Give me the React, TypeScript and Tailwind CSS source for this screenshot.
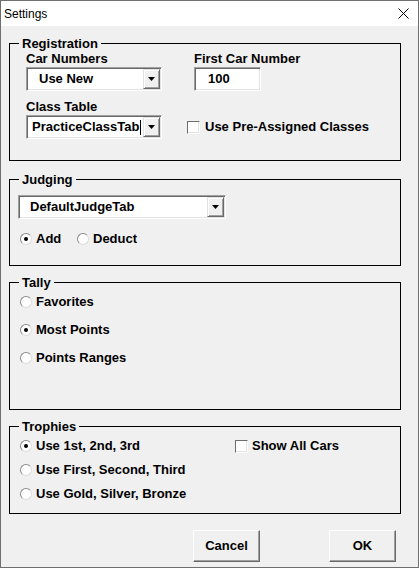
import React from 'react';

const LABEL = "text-[13px] leading-[14px] font-bold";
const SUNKEN = "border border-t-[#a0a0a0] border-l-[#a0a0a0] border-r-white border-b-white shadow-[inset_1px_1px_0_#696969,inset_-1px_-1px_0_#e3e3e3] bg-white";

function Radio({ checked }: { checked?: boolean }) {
  return (
    <span className="flex h-3 w-3 shrink-0 items-center justify-center rounded-full border border-t-[#8a8a8a] border-l-[#8a8a8a] border-r-[#dcdcdc] border-b-[#dcdcdc] bg-white">
      {checked && <span className="h-1 w-1 rounded-full bg-black" />}
    </span>
  );
}

function Check() {
  return (
    <span className="h-[13px] w-[13px] shrink-0 border border-t-[#6d6d6d] border-l-[#6d6d6d] border-r-white border-b-white bg-white shadow-[inset_-1px_-1px_0_#e3e3e3]" />
  );
}

function Combo({ value, className, pad, cursor }: { value: string; className: string; pad: string; cursor?: boolean }) {
  return (
    <div className={`flex h-6 p-px ${SUNKEN} ${className}`}>
      <div className={`flex flex-1 items-center overflow-hidden ${pad} ${LABEL}`}>
        <span className="whitespace-nowrap">{value}</span>
        {cursor && <span className="ml-px h-[15px] w-px shrink-0 bg-black" />}
      </div>
      <div className="flex w-[17px] items-center justify-center border border-t-[#e3e3e3] border-l-[#e3e3e3] border-r-[#696969] border-b-[#696969] bg-[#f0f0f0] shadow-[inset_1px_1px_0_#fff,inset_-1px_-1px_0_#a0a0a0]">
        <svg width="7" height="4" viewBox="0 0 7 4">
          <path d="M0 0h7L3.5 4z" fill="#000" />
        </svg>
      </div>
    </div>
  );
}

function Group({ title, className, children }: { title: string; className: string; children: React.ReactNode }) {
  return (
    <fieldset className={`w-[392px] border border-black ${className}`}>
      <legend className="ml-[9px] px-[3px] text-[13px] leading-[15px] font-bold">{title}</legend>
      {children}
    </fieldset>
  );
}

function Option({ label, checked }: { label: string; checked?: boolean }) {
  return (
    <div className="flex h-[14px] items-center gap-1">
      <Radio checked={checked} />
      <span className={LABEL}>{label}</span>
    </div>
  );
}

export default function App() {
  return (
    <div className="flex h-[568px] w-[419px] flex-col border border-[#6f6f6f] bg-[#f0f0f0] font-['Liberation_Sans',Arial,sans-serif] text-black">
      {/* Title bar */}
      <div className="flex h-[25px] shrink-0 items-center justify-between bg-white pl-[3px] pr-[9px]">
        <span className="text-[12px]">Settings</span>
        <svg width="11" height="11" viewBox="0 0 11 11">
          <path d="M0.5 0.5l10 10M10.5 0.5l-10 10" stroke="#000" strokeWidth="1" />
        </svg>
      </div>

      <div className="px-[8px]">
        {/* Registration */}
        <Group title="Registration" className="mt-[10px] pb-[21px]">
          <div className="pl-[16px] pt-px">
            <div className="flex">
              <div className="w-[136px]">
                <div className={LABEL}>Car Numbers</div>
                <Combo value="Use New" className="mt-px w-[136px]" pad="pl-[11px]" />
              </div>
              <div className="ml-[32px]">
                <div className={LABEL}>First Car Number</div>
                <div className={`mt-px flex h-6 w-[67px] items-center pl-[13px] ${SUNKEN} ${LABEL}`}>100</div>
              </div>
            </div>
            <div className="mt-[9px] flex items-end">
              <div className="w-[136px]">
                <div className={LABEL}>Class Table</div>
                <Combo value="PracticeClassTab" className="mt-px w-[136px]" pad="pl-[4px]" cursor />
              </div>
              <div className="ml-[25px] flex h-6 items-center gap-[5px]">
                <Check />
                <span className={LABEL}>Use Pre-Assigned Classes</span>
              </div>
            </div>
          </div>
        </Group>

        {/* Judging */}
        <Group title="Judging" className="mt-[11px] pb-[19px]">
          <Combo value="DefaultJudgeTab" className="mt-[8px] ml-[8px] w-[208px]" pad="pl-[10px]" />
          <div className="mt-[13px] flex pl-[10px]">
            <div className="w-[57px]">
              <Option label="Add" checked />
            </div>
            <Option label="Deduct" />
          </div>
        </Group>

        {/* Tally */}
        <Group title="Tally" className="mt-[9px] pb-[44px]">
          <div className="mt-[5px] flex flex-col gap-[14px] pl-[10px]">
            <Option label="Favorites" />
            <Option label="Most Points" checked />
            <Option label="Points Ranges" />
          </div>
        </Group>

        {/* Trophies */}
        <Group title="Trophies" className="mt-[9px] pb-[12px]">
          <div className="mt-[5px] flex flex-col gap-[10px] pl-[10px]">
            <div className="flex items-center">
              <div className="w-[215px]">
                <Option label="Use 1st, 2nd, 3rd" checked />
              </div>
              <div className="flex items-center gap-1">
                <Check />
                <span className={LABEL}>Show All Cars</span>
              </div>
            </div>
            <Option label="Use First, Second, Third" />
            <Option label="Use Gold, Silver, Bronze" />
          </div>
        </Group>

        {/* Buttons */}
        <div className="mt-[16px] flex gap-[69px] pl-[184px]">
          <button className="h-8 w-[67px] border border-t-white border-l-white border-r-[#696969] border-b-[#696969] bg-[#f0f0f0] text-[13px] font-bold shadow-[inset_-1px_-1px_0_#a0a0a0]">
            Cancel
          </button>
          <button className="h-8 w-[67px] border border-t-white border-l-white border-r-[#696969] border-b-[#696969] bg-[#f0f0f0] text-[13px] font-bold shadow-[inset_-1px_-1px_0_#a0a0a0]">
            OK
          </button>
        </div>
      </div>
    </div>
  );
}
